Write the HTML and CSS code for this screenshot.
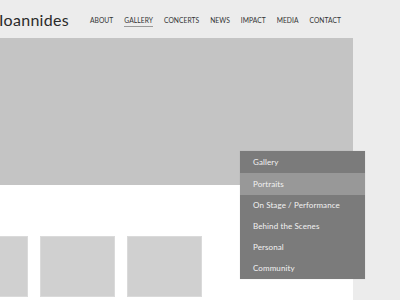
FILE: index.html
```html
<!DOCTYPE html>
<html lang="en">
<head>
  <meta charset="UTF-8">
  <meta name="viewport" content="width=device-width, initial-scale=1.0">
  <title>Ioannides – Gallery</title>
  <link rel="stylesheet" href="styles.css">
</head>
<body>
  <header class="site-header">
    <div class="logo">Ioannides</div>
    <nav class="main-nav">
      <a href="#">About</a>
      <a href="#" class="current">Gallery</a>
      <a href="#">Concerts</a>
      <a href="#">News</a>
      <a href="#">Impact</a>
      <a href="#">Media</a>
      <a href="#">Contact</a>
    </nav>
  </header>
  <main class="page">
    <div class="hero"></div>
    <div class="thumbs">
      <div class="thumb"></div>
      <div class="thumb"></div>
      <div class="thumb"></div>
    </div>
  </main>
  <ul class="dropdown">
    <li>Gallery</li>
    <li class="active">Portraits</li>
    <li>On Stage / Performance</li>
    <li>Behind the Scenes</li>
    <li>Personal</li>
    <li>Community</li>
  </ul>
</body>
</html>
```

FILE: styles.css
```css
*, *::before, *::after { box-sizing: border-box; }
html, body {
  margin: 0;
  padding: 0;
  width: 400px;
  height: 300px;
  overflow: hidden;
  background: #ececec;
  font-family: Lato, 'Open Sans', sans-serif;
}
.site-header {
  height: 38px;
  display: flex;
  align-items: center;
}
.logo {
  margin-left: -1px;
  margin-top: 0;
  font-size: 16px;
  font-weight: 400;
  color: #2a2a2a;
  letter-spacing: 0.3px;
  width: 91px;
}
.main-nav {
  display: flex;
  gap: 11px;
  margin-top: 4px;
}
.main-nav a {
  font-size: 6.7px;
  letter-spacing: 0.05px;
  text-transform: uppercase;
  color: #333;
  text-decoration: none;
  padding-bottom: 2px;
}
.main-nav a.current {
  border-bottom: 1px solid #9a9a9a;
}
.page {
  width: 353px;
  height: 262px;
  background: #fff;
  overflow: hidden;
}
.hero {
  height: 147px;
  background: #c4c4c4;
}
.thumbs {
  display: flex;
  gap: 12px;
  margin: 51px 0 0 -47px;
}
.thumb {
  flex: none;
  width: 75px;
  height: 61px;
  background: #d0d0d0;
  border: 1px solid #dadada;
}
.dropdown {
  position: absolute;
  left: 240px;
  top: 151px;
  width: 125px;
  margin: 0;
  padding: 0;
  list-style: none;
  background: #7b7b7b;
  box-shadow: 0 0 1px rgba(0, 0, 0, 0.15);
}
.dropdown li {
  height: 21px;
  line-height: 21px;
  padding-left: 13px;
  font-size: 8px;
  letter-spacing: 0.1px;
  color: #f2f2f2;
}
.dropdown li:nth-child(-n+2) {
  height: 22px;
  line-height: 22px;
}
.dropdown li.active {
  background: #989898;
}
```
